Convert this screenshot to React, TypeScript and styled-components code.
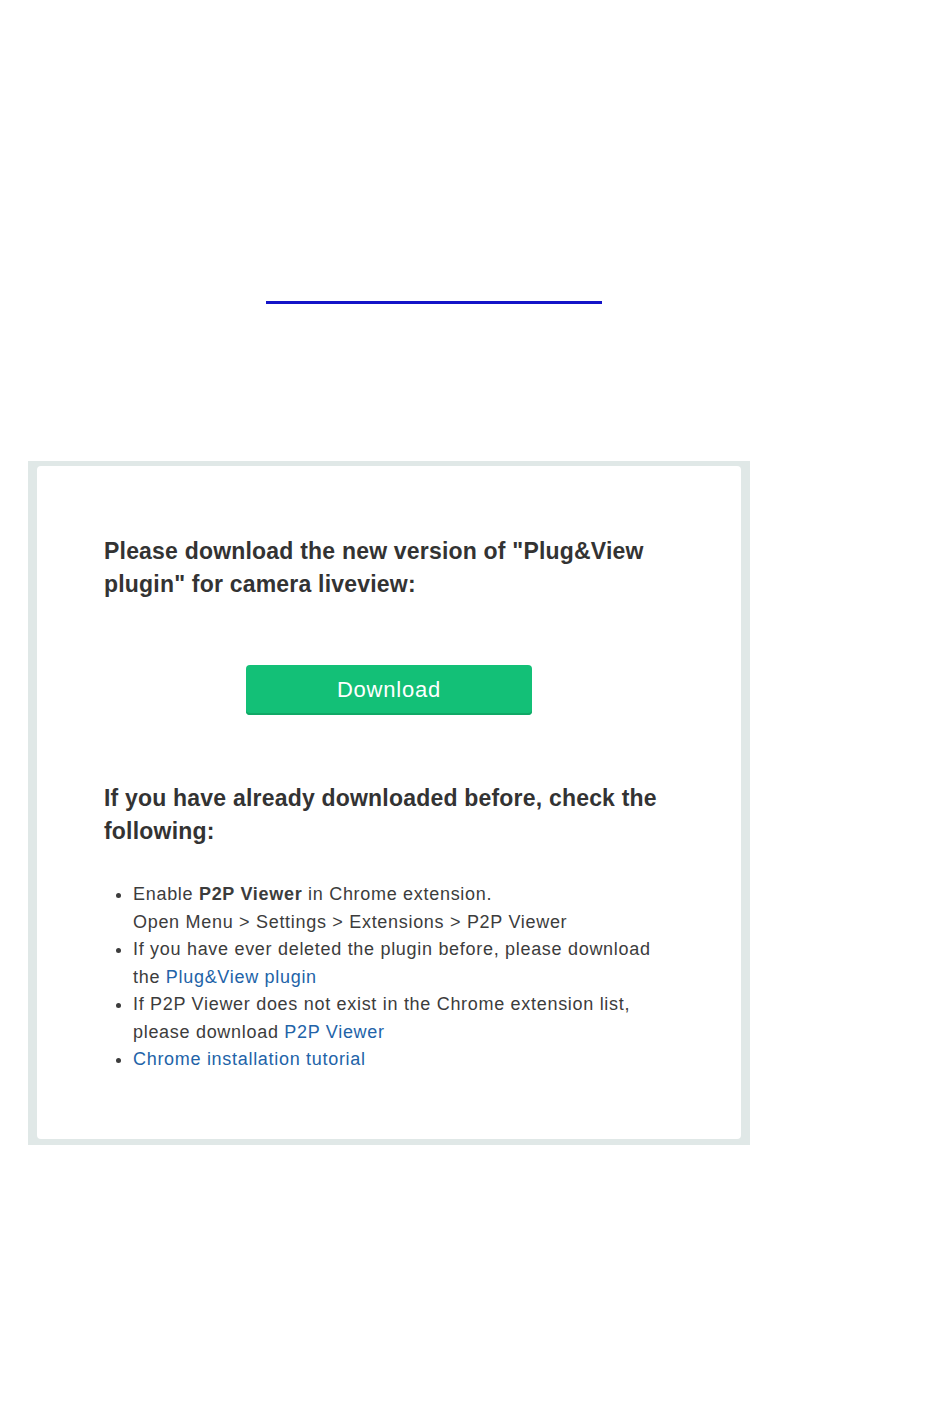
import React from "react";
import styled, { createGlobalStyle } from "styled-components";

const GlobalStyle = createGlobalStyle`
    html, body {
        margin: 0;
        padding: 0;
        background: #ffffff;
    }
    body {
        font-family: "Liberation Sans", Arial, sans-serif;
        color: #333333;
    }
`;

const Page = styled.div`
    width: 950px;
    min-height: 1403px;
    display: flex;
    flex-direction: column;
`;

const TopArea = styled.div`
    height: 461px;
    display: flex;
    flex-direction: column;
`;

const EmptyLink = styled.a`
    display: block;
    margin-top: 301px;
    margin-left: 266px;
    width: 336px;
    height: 0;
    border-bottom: 3px solid #1414c8;
`;

const Frame = styled.div`
    margin-left: 28px;
    width: 722px;
    box-sizing: border-box;
    padding: 5px 9px 6px 9px;
    background: #e0e8e7;
`;

const Card = styled.div`
    background: #ffffff;
    border-radius: 4px;
    padding: 69px 67px 65px 67px;
    display: flex;
    flex-direction: column;
`;

const Heading = styled.h2`
    margin: 0;
    font-size: 23px;
    line-height: 33px;
    letter-spacing: 0.2px;
    font-weight: bold;
    color: #333333;
`;

const ButtonRow = styled.div`
    display: flex;
    justify-content: center;
    margin: 64px 0 67px 0;
`;

const DownloadButton = styled.button`
    width: 286px;
    height: 50px;
    border: none;
    border-radius: 4px;
    background: #13c077;
    box-shadow: inset 0 -2px 0 #10a866;
    color: #ffffff;
    font-family: "Liberation Sans", Arial, sans-serif;
    font-size: 22px;
    letter-spacing: 0.8px;
    cursor: pointer;
`;

const Steps = styled.ul`
    margin: 33px 0 0 0;
    padding-left: 29px;
    list-style: disc;
    font-size: 18px;
    line-height: 27.5px;
    letter-spacing: 0.7px;
    color: #3c3c3c;
`;

const Step = styled.li`
    padding-left: 0;
`;

const Link = styled.a`
    color: #2263a8;
    text-decoration: none;
`;

export default function App() {
    return (
        <Page>
            <GlobalStyle />
            <TopArea>
                <EmptyLink href="#" />
            </TopArea>
            <Frame>
                <Card>
                    <Heading>
                        Please download the new version of "Plug&amp;View plugin" for camera liveview:
                    </Heading>
                    <ButtonRow>
                        <DownloadButton>Download</DownloadButton>
                    </ButtonRow>
                    <Heading>If you have already downloaded before, check the following:</Heading>
                    <Steps>
                        <Step>
                            Enable <b>P2P Viewer</b> in Chrome extension.
                            <br />
                            Open Menu &gt; Settings &gt; Extensions &gt; P2P Viewer
                        </Step>
                        <Step>
                            If you have ever deleted the plugin before, please download the{" "}
                            <Link href="#">Plug&amp;View plugin</Link>
                        </Step>
                        <Step>
                            If P2P Viewer does not exist in the Chrome extension list, please download{" "}
                            <Link href="#">P2P Viewer</Link>
                        </Step>
                        <Step>
                            <Link href="#">Chrome installation tutorial</Link>
                        </Step>
                    </Steps>
                </Card>
            </Frame>
        </Page>
    );
}
